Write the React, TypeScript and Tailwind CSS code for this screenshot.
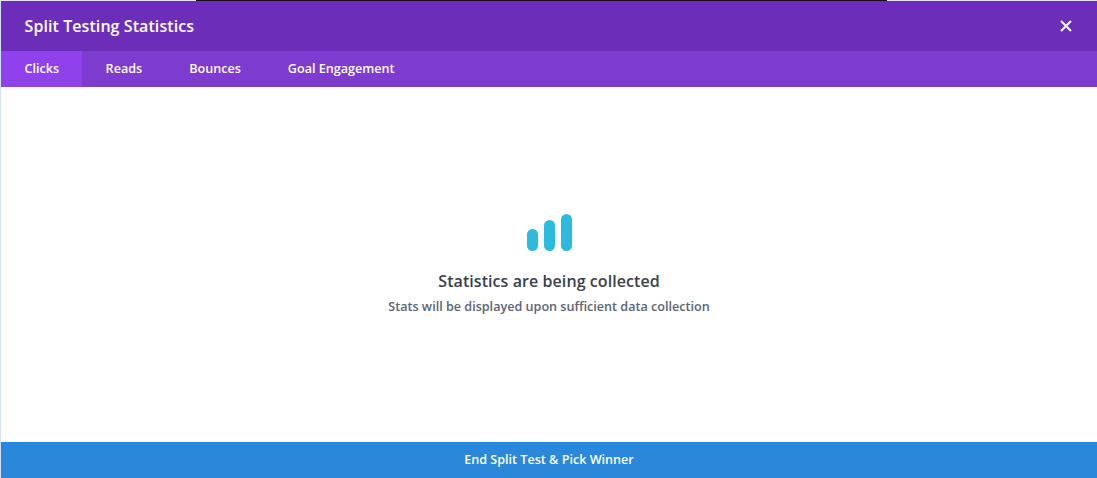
export default function App() {
  return (
    <div className="w-[1097px] h-[478px] flex flex-col overflow-hidden bg-white font-['Open_Sans',sans-serif]">
      {/* strip of the page behind the modal */}
      <div className="flex h-px shrink-0">
        <div className="w-[196px] bg-[#dfe6f3]" />
        <div className="w-[691px] bg-[#14101c]" />
        <div className="flex-1 bg-[#dfe6f3]" />
      </div>
      <div className="flex-1 min-h-0 flex flex-col border-l border-[#d5e0f5]">
        <header className="h-[50px] shrink-0 flex items-center justify-between pl-[23.5px] pr-[25px] bg-[#6c2eb9]">
          <h1 className="text-base font-semibold tracking-[0.08px] text-white">Split Testing Statistics</h1>
          <button className="w-3 h-3 flex items-center justify-center text-white">
            <svg width="12" height="12" viewBox="0 0 12 12" fill="none" stroke="currentColor" strokeWidth="2">
              <path d="M1 1 L11 11 M11 1 L1 11" />
            </svg>
          </button>
        </header>
        <nav className="h-9 shrink-0 flex bg-[#7e3bd0] text-[12.6px] font-semibold text-white">
          <a className="pl-[23.5px] pr-[23px] flex items-center bg-[#8f42ec]">Clicks</a>
          <a className="px-[23.5px] flex items-center">Reads</a>
          <a className="px-[23.5px] flex items-center">Bounces</a>
          <a className="px-[23.5px] flex items-center">Goal Engagement</a>
        </nav>
        <main className="flex-1 flex flex-col items-center pt-[127px]">
          <svg width="45" height="37" viewBox="0 0 45 37" fill="#2cbbdf">
            <rect x="0" y="15" width="11" height="22" rx="5.5" />
            <rect x="17" y="6" width="11" height="31" rx="5.5" />
            <rect x="34" y="0" width="11" height="37" rx="5.5" />
          </svg>
          <h2 className="mt-[18px] text-base leading-[24px] font-semibold tracking-[0.07px] text-[#3a3f4a]">Statistics are being collected</h2>
          <p className="mt-1 text-[12.6px] leading-[20px] font-semibold text-[#5b6573]">Stats will be displayed upon sufficient data collection</p>
        </main>
        <button className="h-9 shrink-0 bg-[#2b87da] text-[12.6px] font-semibold text-white">End Split Test &amp; Pick Winner</button>
      </div>
    </div>
  )
}
